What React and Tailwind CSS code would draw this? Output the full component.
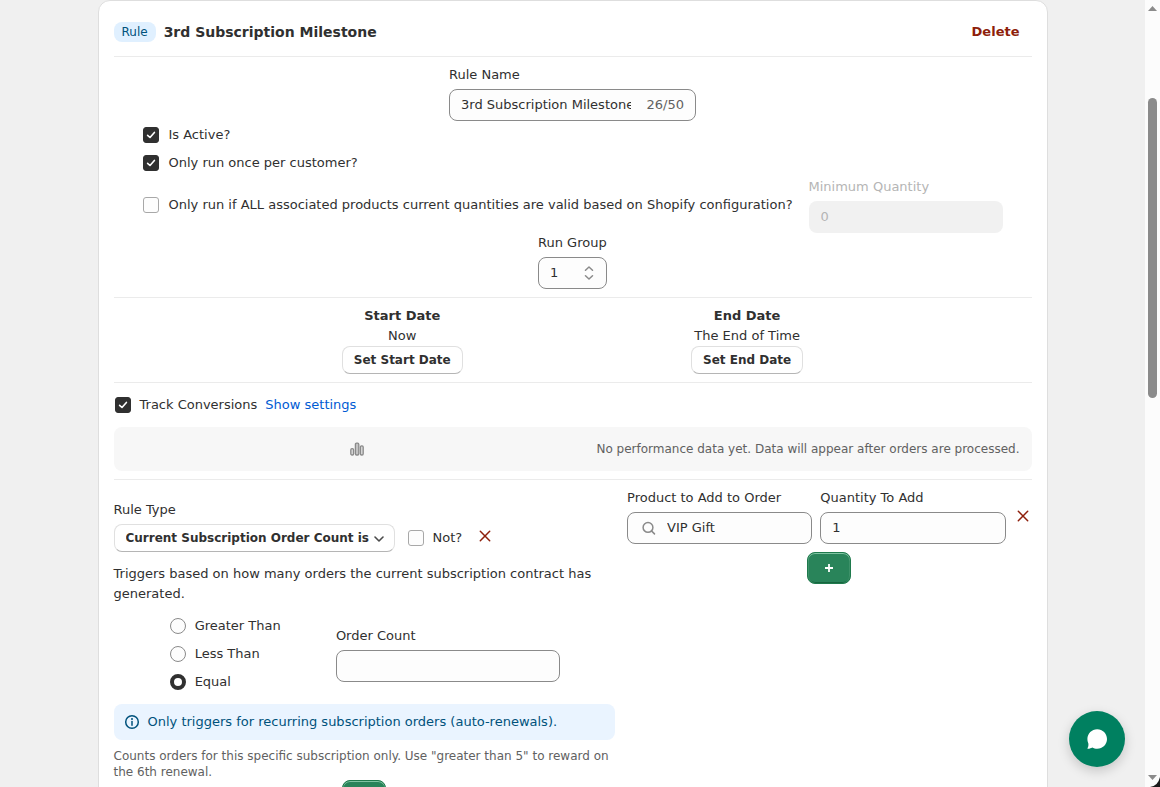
import { useState } from 'react'

function Checkbox({ id, label, checked, onChange }) {
  return (
    <label htmlFor={id} className="flex min-h-7 items-center gap-2">
      <span className="mx-px grid size-4 shrink-0 place-items-center">
        <input
          id={id} type="checkbox" checked={checked}
          onChange={e => onChange(e.target.checked)}
          className="col-start-1 row-start-1 size-4 appearance-none rounded-[3px] border border-[#a8a8a8] bg-[#fdfdfd] checked:border-[#303030] checked:bg-[#303030]"
        />
        {checked && (
          <svg viewBox="0 0 16 16" className="pointer-events-none col-start-1 row-start-1 size-4" fill="none" stroke="#fff" strokeWidth="1.6" strokeLinecap="round" strokeLinejoin="round">
            <path d="M4.600 8.300 7 10.500 11.400 5.400" />
          </svg>
        )}
      </span>
      <span>{label}</span>
    </label>
  )
}

function Radio({ id, name, label, value, selected, onChange }) {
  return (
    <label htmlFor={id} className="flex min-h-7 items-center gap-2">
      <input
        id={id} type="radio" name={name} checked={selected === value}
        onChange={() => onChange(value)}
        className="mx-px size-4 shrink-0 appearance-none rounded-full border border-[#8a8a8a] bg-[#fdfdfd] checked:border-4 checked:border-[#303030] checked:bg-white"
      />
      <span>{label}</span>
    </label>
  )
}

function Field({ id, label, className, labelClassName, children }) {
  return (
    <div className={`flex flex-col gap-1 ${className ?? ''}`}>
      <label htmlFor={id} className={`whitespace-nowrap ${labelClassName ?? ''}`}>{label}</label>
      {children}
    </div>
  )
}

function XButton({ label, className }) {
  return (
    <button aria-label={label} className={`flex h-6 shrink-0 items-center justify-center ${className}`}>
      <svg viewBox="0 0 12 12" className="size-3" fill="none" stroke="#8e1f0b" strokeWidth="1.5" strokeLinecap="round">
        <path d="M1.300 1.300l9.400 9.400M10.700 1.300l-9.400 9.400" />
      </svg>
    </button>
  )
}

function AddButton({ label }) {
  return (
    <button
      aria-label={label}
      className="flex h-8 w-11 items-center justify-center rounded-lg border border-[#1f7a4d] bg-[#29845a] text-white shadow-[inset_0_1px_0_0_#7fc4a2,inset_1px_0_0_0_#3d9169,inset_-1px_0_0_0_#3d9169,inset_0_-1px_0_0_#17653f]"
    >
      <svg viewBox="0 0 8 8" className="size-2" fill="none" stroke="currentColor" strokeWidth="1.8">
        <path d="M4 0v8M0 4h8" />
      </svg>
    </button>
  )
}

function DateBlock({ title, value, action }) {
  return (
    <div className="flex flex-col items-center">
      <h3 className="font-bold">{title}</h3>
      <p>{value}</p>
      <button className="h-7 rounded-lg border border-[#e0e0e0] border-b-[#b5b5b5] bg-white px-[11px] text-[12px] font-bold">
        {action}
      </button>
    </div>
  )
}

function Scrollbar() {
  return (
    <div className="relative flex w-[15px] shrink-0 flex-col items-center bg-[#fcfcfc]" aria-hidden="true">
      <svg viewBox="0 0 9 5" className="mt-1.5 h-[5px] w-[9px]" fill="#8b8b8b"><path d="M4.500 0 9 5H0z" /></svg>
      <div className="mt-[87px] h-[300px] w-[9px] rounded-full bg-[#8b8b8b]" />
      <svg viewBox="0 0 9 5" className="mt-auto mb-[7px] h-[5px] w-[9px]" fill="#8b8b8b"><path d="M0 0h9L4.500 5z" /></svg>
      <svg viewBox="0 0 10 10" className="absolute right-0 bottom-0 size-2.5" fill="#1a1a1a"><path d="M10 0v10H0Q8 9 10 0z" /></svg>
    </div>
  )
}

const inputClass = 'h-8 w-full min-w-0 rounded-lg border border-[#8a8a8a] bg-[#fdfdfd] px-[11px] pb-px'
const dividerClass = 'border-[#ebebeb]'

export default function App() {
  const [name, setName] = useState('3rd Subscription Milestone')
  const [active, setActive] = useState(true)
  const [once, setOnce] = useState(true)
  const [validQty, setValidQty] = useState(false)
  const [group, setGroup] = useState(1)
  const [track, setTrack] = useState(true)
  const [not, setNot] = useState(false)
  const [compare, setCompare] = useState('equal')
  const [orderCount, setOrderCount] = useState('')
  const [product, setProduct] = useState('VIP Gift')
  const [quantity, setQuantity] = useState('1')

  return (
    <div className="flex h-screen bg-[#f0f0f0] font-['DejaVu_Sans',sans-serif] text-[13px] leading-5 text-[#303030]">
      <div className="relative min-w-0 flex-1 overflow-hidden">
        <main className="mx-auto flex max-w-[950px] flex-col gap-2 rounded-xl border border-[#dedede] bg-white p-[15px]">
          <header className="flex h-8 items-center justify-between">
            <div className="flex items-center gap-2">
              <span className="rounded-lg bg-[#e0f0ff] px-2 text-[12px] text-[#00527c]">Rule</span>
              <h2 className="text-[14px] font-bold">{name}</h2>
            </div>
            <button className="px-3 font-bold text-[#8e1f0b]">Delete</button>
          </header>
          <hr className={dividerClass} />

          <section className="mx-auto flex flex-col">
            <Field id="rule-name" label="Rule Name" className="w-[247px] self-center">
              <div className="flex h-8 items-center gap-4 rounded-lg border border-[#8a8a8a] bg-[#fdfdfd] px-[11px]">
                <input
                  id="rule-name" type="text" value={name} maxLength={50}
                  onChange={e => setName(e.target.value)}
                  className="min-w-0 flex-1 outline-none"
                />
                <span className="text-[#616161]">{name.length}/50</span>
              </div>
            </Field>
            <Checkbox id="active" label="Is Active?" checked={active} onChange={setActive} />
            <Checkbox id="once" label="Only run once per customer?" checked={once} onChange={setOnce} />
            <div className="flex items-center gap-4">
              <Checkbox
                id="valid-qty"
                label="Only run if ALL associated products current quantities are valid based on Shopify configuration?"
                checked={validQty} onChange={setValidQty}
              />
              <Field id="min-qty" label="Minimum Quantity" className="w-[194px]" labelClassName="text-[#b5b5b5]">
                <input id="min-qty" type="text" value="0" disabled readOnly className="h-8 w-full rounded-lg bg-[#f1f1f1] px-3 pb-px text-[#b5b5b5]" />
              </Field>
            </div>
            <Field id="run-group" label="Run Group" className="w-[69px] self-center">
              <div className="flex h-8 items-center justify-between rounded-lg border border-[#8a8a8a] bg-[#fdfdfd] px-[11px]">
                <input
                  id="run-group" type="text" inputMode="numeric" value={group}
                  onChange={e => setGroup(Number(e.target.value) || 0)}
                  className="w-6 outline-none"
                />
                <div className="flex flex-col gap-1 pr-px">
                  <button aria-label="Increase" onClick={() => setGroup(g => g + 1)}>
                    <svg viewBox="0 0 10 5" className="h-[5px] w-2.5" fill="none" stroke="#8a8a8a" strokeWidth="1.5" strokeLinecap="round" strokeLinejoin="round"><path d="M1.500 4.200 5 1l3.500 3.200" /></svg>
                  </button>
                  <button aria-label="Decrease" onClick={() => setGroup(g => g - 1)}>
                    <svg viewBox="0 0 10 5" className="h-[5px] w-2.5" fill="none" stroke="#8a8a8a" strokeWidth="1.5" strokeLinecap="round" strokeLinejoin="round"><path d="M1.500 .8 5 4l3.500-3.200" /></svg>
                  </button>
                </div>
              </div>
            </Field>
          </section>
          <hr className={dividerClass} />

          <section className="flex justify-evenly">
            <DateBlock title="Start Date" value="Now" action="Set Start Date" />
            <DateBlock title="End Date" value="The End of Time" action="Set End Date" />
          </section>
          <hr className={dividerClass} />

          <section className="flex items-center gap-2">
            <Checkbox id="track" label="Track Conversions" checked={track} onChange={setTrack} />
            <a href="#settings" className="text-[#005bd3]">Show settings</a>
          </section>
          <section className="flex items-center gap-2 rounded-lg bg-[#f7f7f7] p-3 text-[12px] text-[#616161]">
            <div className="flex flex-1 justify-center">
              <svg viewBox="0 0 14 14" className="size-3.5" fill="#d9d9d9" stroke="#8a8a8a" strokeWidth="1.300">
                <rect x=".8" y="6.700" width="2.800" height="6.300" rx="1.200" />
                <rect x="5.400" y="1.200" width="3.400" height="11.800" rx="1.200" fill="#c4c4c4" />
                <rect x="10.400" y="3.800" width="2.800" height="9.200" rx="1.200" />
              </svg>
            </div>
            <p>No performance data yet. Data will appear after orders are processed.</p>
          </section>
          <hr className={dividerClass} />

          <section className="grid grid-cols-[31fr_25fr] gap-3">
            <div className="flex flex-col pt-3">
              <div className="flex items-end gap-3">
                <Field id="rule-type" label="Rule Type" className="w-[281px]">
                  <div className="grid items-center">
                    <select
                      id="rule-type"
                      className="col-start-1 row-start-1 h-7 w-full appearance-none rounded-lg border border-[#e0e0e0] border-b-[#b5b5b5] bg-white px-[11px] text-[12px] font-bold"
                    >
                      <option>Current Subscription Order Count is</option>
                    </select>
                    <svg viewBox="0 0 10 6" className="pointer-events-none col-start-1 row-start-1 mt-0.5 mr-[11px] h-1.5 w-2.5 justify-self-end" fill="none" stroke="#4a4a4a" strokeWidth="1.6" strokeLinecap="round" strokeLinejoin="round">
                      <path d="M1 1l4 4 4-4" />
                    </svg>
                  </div>
                </Field>
                <Checkbox id="not" label="Not?" checked={not} onChange={setNot} />
                <XButton label="Remove rule" className="mb-1 w-[22px]" />
              </div>
              <p className="mt-3">Triggers based on how many orders the current subscription contract has generated.</p>
              <div className="mt-2 flex items-center justify-evenly">
                <div className="flex flex-col">
                  <Radio id="greater" name="compare" label="Greater Than" value="greater" selected={compare} onChange={setCompare} />
                  <Radio id="less" name="compare" label="Less Than" value="less" selected={compare} onChange={setCompare} />
                  <Radio id="equal" name="compare" label="Equal" value="equal" selected={compare} onChange={setCompare} />
                </div>
                <Field id="order-count" label="Order Count" className="w-56">
                  <input id="order-count" type="text" value={orderCount} onChange={e => setOrderCount(e.target.value)} className={inputClass} />
                </Field>
              </div>
              <div className="mt-2 flex items-center gap-1.5 rounded-lg bg-[#eaf4ff] p-2 text-[#00527c]">
                <svg viewBox="0 0 20 20" className="size-5 shrink-0" fill="none" stroke="currentColor" strokeWidth="1.5" strokeLinecap="round">
                  <circle cx="10" cy="10" r="6.300" />
                  <path d="M10 9.500v3.700" />
                  <circle cx="10" cy="6.900" r="1" fill="currentColor" stroke="none" />
                </svg>
                <p>Only triggers for recurring subscription orders (auto-renewals).</p>
              </div>
              <p className="mt-2 text-[12px] leading-4 text-[#616161]">
                Counts orders for this specific subscription only. Use "greater than 5" to reward on the 6th renewal.
              </p>
              <div className="flex justify-center">
                <AddButton label="Add rule" />
              </div>
            </div>

            <div className="flex flex-col items-center gap-2">
              <div className="flex w-full items-center gap-2">
                <Field id="product" label="Product to Add to Order" className="min-w-0 flex-1">
                  <div className="flex h-8 items-center gap-2 rounded-lg border border-[#8a8a8a] bg-[#fdfdfd] px-[11px]">
                    <svg viewBox="0 0 20 20" className="size-5 shrink-0" fill="none" stroke="#8a8a8a" strokeWidth="1.5" strokeLinecap="round">
                      <circle cx="9" cy="9.400" r="4.900" />
                      <path d="M12.700 13.100l2.800 2.800" />
                    </svg>
                    <input id="product" type="text" value={product} onChange={e => setProduct(e.target.value)} className="w-full min-w-0 outline-none" />
                  </div>
                </Field>
                <Field id="quantity" label="Quantity To Add" className="min-w-0 flex-1">
                  <input id="quantity" type="text" value={quantity} onChange={e => setQuantity(e.target.value)} className={inputClass} />
                </Field>
                <XButton label="Remove product" className="w-[18px]" />
              </div>
              <AddButton label="Add product" />
            </div>
          </section>
        </main>

        <button aria-label="Open chat" className="absolute right-5 bottom-5 flex size-14 items-center justify-center rounded-full bg-[#008060] shadow-[0_4px_12px_rgba(0,0,0,0.18)]">
          <svg viewBox="0 0 20 20" className="size-5" fill="#fff">
            <path d="M10.200 .2C15.600 .2 20 4.600 20 10s-4.400 9.800-9.800 9.800c-1.800 0-3.500-.5-5-1.300-1 .7-2.500 1.200-4.300 1.300-.4 0-.6-.4-.3-.8.8-1.300.9-2.800.8-4.300A9.700 9.700 0 0 1 .4 10C.4 4.600 4.800.2 10.200.2z" />
          </svg>
        </button>
      </div>
      <Scrollbar />
    </div>
  )
}
